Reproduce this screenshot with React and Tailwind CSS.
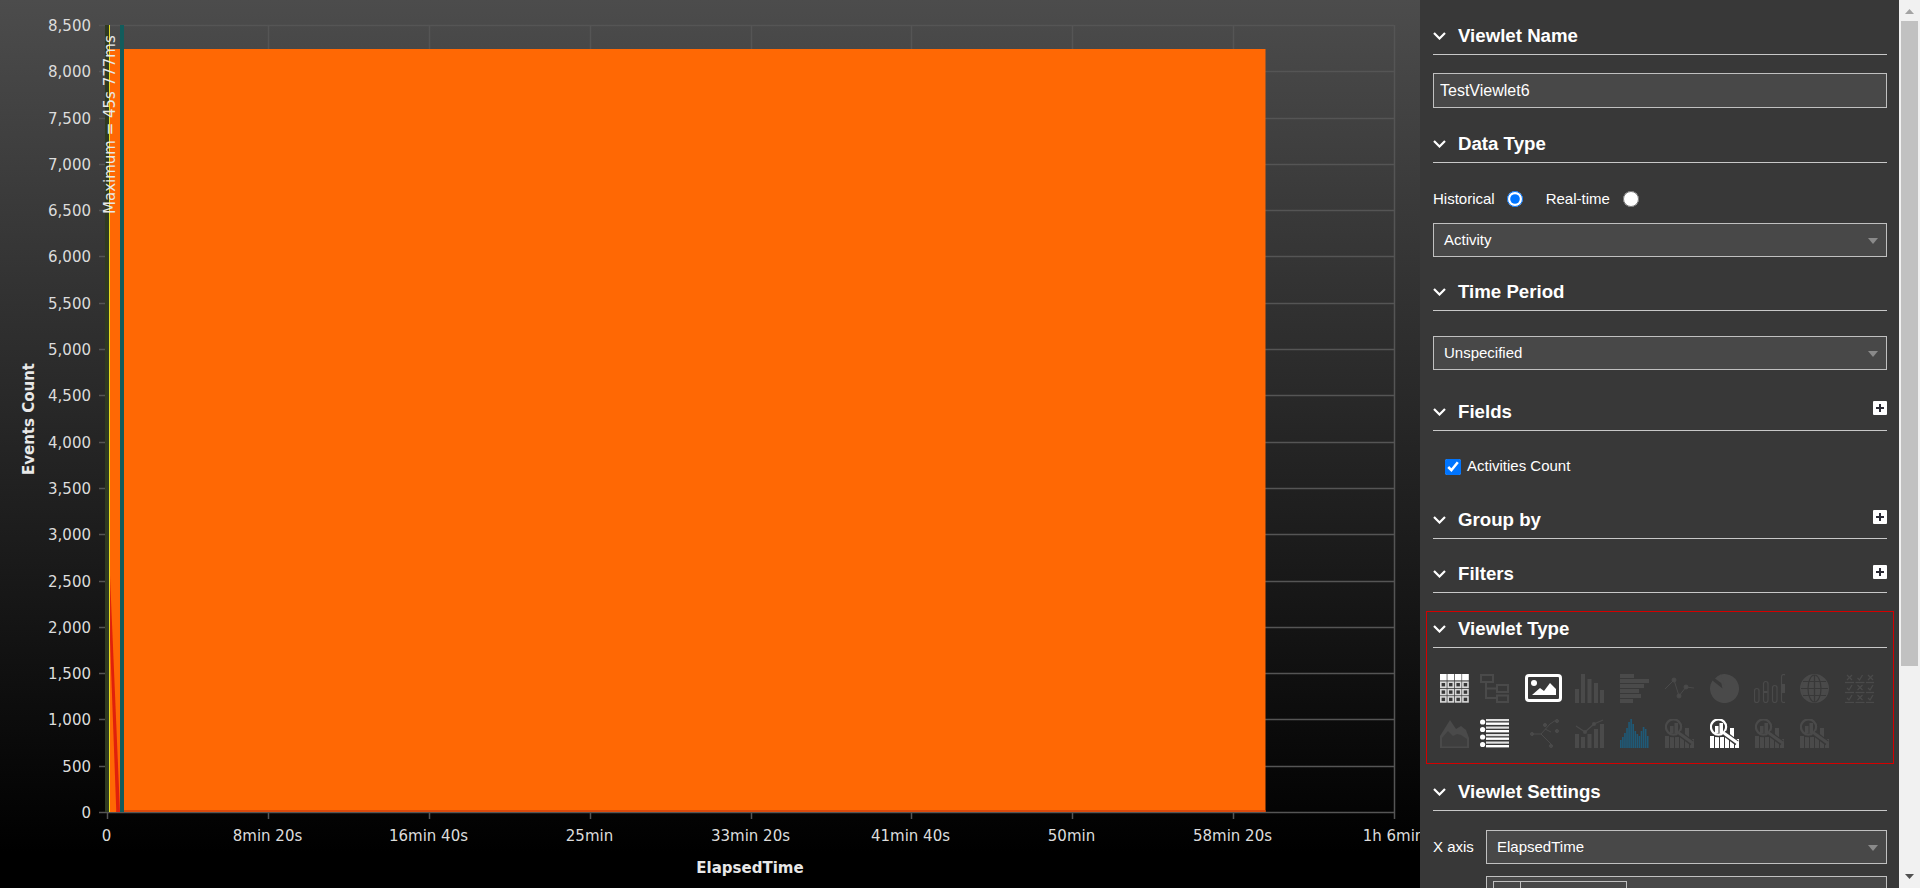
import React from 'react';

const yLabels = ['8,500', '8,000', '7,500', '7,000', '6,500', '6,000', '5,500', '5,000', '4,500', '4,000', '3,500', '3,000', '2,500', '2,000', '1,500', '1,000', '500', '0'];
const xLabels = ['0', '8min 20s', '16min 40s', '25min', '33min 20s', '41min 40s', '50min', '58min 20s', '1h 6min'];

function Chart() {
  const top = 25;
  const bottom = 812;
  const left = 107;
  const right = 1394;
  const stepY = (bottom - top) / 17;
  const stepX = (right - left) / 8;

  return (
    <div className="h-full w-[1420px] shrink-0 overflow-hidden bg-[linear-gradient(180deg,#4c4c4c_0%,#000000_96%)]">
      <svg width="1420" height="888" className="block" style={{ fontFamily: '"DejaVu Sans", sans-serif' }}>
        {yLabels.map((label, i) => {
          const y = Math.round(top + i * stepY) + 0.5;
          return (
            <g key={label}>
              <line x1="99" x2={right} y1={y} y2={y} stroke="#555555" strokeWidth="1.5" />
              <text x="91" y={y + 5} textAnchor="end" fontSize="15" fill="#dcdcdc">{label}</text>
            </g>
          );
        })}
        {xLabels.map((label, i) => {
          const x = Math.round(left + i * stepX) + 0.5;
          return (
            <g key={label}>
              <line x1={x} x2={x} y1={top} y2="819" stroke="#555555" strokeWidth="1.5" />
              <text x={x - 1} y="841" textAnchor="middle" fontSize="15" fill="#dcdcdc">{label}</text>
            </g>
          );
        })}

        <rect x="110" y="49" width="1155.5" height="763" fill="#ff6804" />
        <rect x="116" y="810" width="1149.5" height="2" fill="#dc4a0c" />
        <polygon points="110,576 120,812 116.3,812 110,640" fill="#e0200c" />
        <rect x="105" y="25" width="4" height="787" fill="#2f3a22" />
        <rect x="109" y="25" width="1" height="787" fill="#e4dc22" />
        <rect x="120" y="25" width="4" height="787" fill="#125c5c" />

        <text transform="translate(115,214) rotate(-90)" fontSize="15" fill="#e8e8e8">Maximum = 45s 777ms</text>
        <text transform="translate(34,419) rotate(-90)" textAnchor="middle" fontSize="15" fontWeight="700" fill="#e8e8e8">Events Count</text>
        <text x="750" y="873" textAnchor="middle" fontSize="15" fontWeight="700" fill="#e8e8e8">ElapsedTime</text>
      </svg>
    </div>
  );
}

function Chevron() {
  return (
    <svg width="13" height="8" viewBox="0 0 13 8" className="shrink-0">
      <polyline points="1,1 6.5,6.5 12,1" fill="none" stroke="#fff" strokeWidth="2.2" />
    </svg>
  );
}

function PlusBox({ className }) {
  return (
    <svg width="14" height="14" viewBox="0 0 14 14" className={`shrink-0 self-start ${className}`}>
      <rect width="14" height="14" rx="1" fill="#fff" />
      <path d="M7 3v8M3 7h8" stroke="#2b2b35" strokeWidth="2" />
    </svg>
  );
}

function Header({ title, plus, plusClass = '', className = '' }) {
  return (
    <div className={`flex h-[30px] items-center border-b border-[#c8c8c8] pb-[7px] ${className}`}>
      <Chevron />
      <span className="ml-3 flex-1 text-[18.67px] leading-none font-bold text-white">{title}</span>
      {plus && <PlusBox className={plusClass} />}
    </div>
  );
}

function Select({ value, className = '' }) {
  return (
    <div className={`flex h-[34px] items-center justify-between border border-[#c0c0c0] bg-[#484848] pt-px pr-2 pl-[10px] text-[15px] text-white ${className}`}>
      <span>{value}</span>
      <svg width="10" height="6" viewBox="0 0 10 6"><polygon points="0,0 10,0 5,6" fill="#8a8a8a" /></svg>
    </div>
  );
}

const dim = '#4a4a4a';

function TableIcon() {
  const cols = [0, 7.4, 14.8, 22.1];
  return (
    <svg width="29" height="29" viewBox="0 0 29 29">
      {cols.map((x) => <rect key={x} x={x} y="0" width="6.7" height="6.4" fill="#fff" />)}
      {[7.4, 14.8, 22.1].map((y) => cols.map((x) => (
        <rect key={`${x}-${y}`} x={x + 0.8} y={y + 0.8} width="5.1" height="5" fill="none" stroke="#d8d8d8" strokeWidth="1.6" />
      )))}
    </svg>
  );
}

function TreeIcon() {
  return (
    <svg width="29" height="29" viewBox="0 0 29 29" fill="none" stroke={dim} strokeWidth="2">
      <rect x="1" y="1" width="12" height="7" />
      <rect x="17" y="11" width="11" height="7" />
      <rect x="17" y="21.5" width="11" height="6.5" />
      <path d="M6 8v16h11M6 14.5h11" />
    </svg>
  );
}

function ImageIcon() {
  return (
    <svg width="38" height="29" viewBox="0 0 38 29">
      <rect x="1.5" y="1.5" width="34" height="25" rx="2.5" fill="none" stroke="#fff" strokeWidth="3" />
      <circle cx="9" cy="9" r="3" fill="#fff" />
      <polygon points="7,21 15,14 19,17 25,9 31,15 31,21" fill="#fff" />
    </svg>
  );
}

function BarsIcon() {
  return (
    <svg width="29" height="29" viewBox="0 0 29 29" fill={dim}>
      <rect x="0" y="15" width="4" height="14" />
      <rect x="6" y="0" width="4" height="29" />
      <rect x="12.5" y="5" width="4" height="24" />
      <rect x="19" y="9" width="4" height="20" />
      <rect x="25" y="16" width="4" height="13" />
    </svg>
  );
}

function HBarsIcon() {
  return (
    <svg width="29" height="29" viewBox="0 0 29 29" fill={dim}>
      <rect x="0" y="0" width="14" height="4" />
      <rect x="0" y="5" width="29" height="4" />
      <rect x="0" y="10" width="24" height="4" />
      <rect x="0" y="15" width="19" height="4" />
      <rect x="0" y="20" width="21" height="4" />
      <rect x="0" y="25" width="13" height="4" />
    </svg>
  );
}

function LineIcon() {
  return (
    <svg width="29" height="29" viewBox="0 0 29 29" fill={dim} stroke={dim}>
      <polyline points="0,15 9,6 14,22 21,13 29,14" fill="none" strokeWidth="1" />
      <circle cx="9" cy="6" r="2" />
      <circle cx="14" cy="22" r="2" />
      <circle cx="21" cy="13" r="2" />
    </svg>
  );
}

function PieIcon() {
  return (
    <svg width="29" height="29" viewBox="0 0 29 29" fill={dim}>
      <path d="M12.5 14.5 9.5 1A14.5 14.5 0 1 1 2.5 6.5Z" />
      <path d="M11 0.5 14.5 11.5 5 4.5A14 14 0 0 1 11 0.5Z" />
    </svg>
  );
}

function CandleIcon() {
  return (
    <svg width="31" height="29" viewBox="0 0 31 29" fill="none" stroke={dim}>
      {[[0, 14], [9, 7], [18, 11], [27, 0]].map(([x, y]) => (
        <g key={x}>
          <rect x={x + 0.5} y={y + 0.5} width="4.5" height={28 - y} rx="2.2" strokeWidth="1.2" />
          <rect x={x + 1} y={y + 10} width="3.5" height={19 - y - 10} fill={dim} stroke="none" />
        </g>
      ))}
    </svg>
  );
}

function GlobeIcon() {
  return (
    <svg width="29" height="29" viewBox="0 0 29 29" fill="none" stroke={dim} strokeWidth="2">
      <circle cx="14.5" cy="14.5" r="13.5" fill={dim} />
      <g stroke="#383838" strokeWidth="1.2">
        <ellipse cx="14.5" cy="14.5" rx="6.5" ry="13.5" />
        <path d="M14.5 1v27M1 14.5h27M3 7.5h23M3 21.5h23" />
      </g>
    </svg>
  );
}

function MatrixIcon() {
  const marks = [
    ['x', 'v', 'x'],
    ['v', 'x', 'v'],
    ['v', 'x', 'v'],
  ];
  return (
    <svg width="29" height="29" viewBox="0 0 29 29" fill="none" stroke={dim} strokeWidth="1.3">
      {marks.map((row, r) => row.map((m, c) => {
        const x = 2 + c * 10.5;
        const y = 1 + r * 10;
        return (
          <g key={`${r}-${c}`}>
            <path d={m === 'x' ? `M${x} ${y}l5 5M${x + 5} ${y}l-5 5` : `M${x} ${y + 3}l2 2 3-5`} />
            <path d={`M${x - 2} ${y + 7.5}h9`} />
          </g>
        );
      }))}
    </svg>
  );
}

function AreaIcon() {
  return (
    <svg width="29" height="29" viewBox="0 0 29 29" fill={dim}>
      <path d="M0 29V17L5 9l5-8 6 9 5-3 5 4 3 8v13Z" />
      <path d="M2 27.5V19l6-7 5 5 4-2 4 1 6 4v7.5Z" fill="#383838" opacity="0.65" />
    </svg>
  );
}

function ListIcon() {
  return (
    <svg width="29" height="29" viewBox="0 0 29 29" fill="#fff">
      {[3, 10.5, 18, 25.5].map((y) => (
        <g key={y}>
          <circle cx="2.6" cy={y} r="2.6" />
          <rect x="6" y={y - 3} width="23" height="2.2" fill="#e0e0e0" />
          <rect x="6" y={y + 0.5} width="23" height="2.4" />
        </g>
      ))}
    </svg>
  );
}

function NetworkIcon() {
  return (
    <svg width="29" height="29" viewBox="0 0 29 29" fill={dim} stroke={dim}>
      <path d="M1 15h10l10 10M11 15l9-10 6-4M15 10l6 3" fill="none" strokeWidth="1" />
      <circle cx="2" cy="15" r="1.6" />
      <circle cx="15" cy="6" r="1.6" />
      <circle cx="27" cy="2" r="1.6" />
      <circle cx="27" cy="12" r="1.6" />
      <circle cx="21" cy="27" r="1.6" />
    </svg>
  );
}

function ComboIcon() {
  return (
    <svg width="29" height="29" viewBox="0 0 29 29" fill={dim} stroke="none">
      <rect x="0" y="15" width="4" height="14" />
      <rect x="6" y="18" width="4" height="11" />
      <rect x="12.5" y="15" width="4" height="14" />
      <rect x="19" y="10" width="4" height="19" />
      <rect x="25" y="5" width="4" height="24" />
      <polyline points="1,7 10,13 19,5 28,1" fill="none" stroke={dim} strokeWidth="1.3" />
      <circle cx="10" cy="13" r="2" />
      <circle cx="19" cy="5" r="2" />
    </svg>
  );
}

function StripedAreaIcon() {
  const heights = [8, 11, 15, 20, 26, 29, 24, 17, 14, 12, 17, 21, 19, 12];
  return (
    <svg width="29" height="29" viewBox="0 0 29 29" fill="#1f5a78">
      {heights.map((h, i) => <rect key={i} x={i * 2.07} y={29 - h} width="1.6" height={h} />)}
    </svg>
  );
}

function SearchChartIcon({ color }) {
  return (
    <svg width="29" height="29" viewBox="0 0 29 29" style={{ color }}>
      <g fill="currentColor">
        <rect x="0" y="17" width="4" height="12" />
        <rect x="5" y="18" width="4" height="11" />
        <rect x="10" y="18" width="4" height="11" />
        <rect x="15" y="18" width="4" height="11" />
        <rect x="20" y="9" width="4" height="20" />
        <rect x="25" y="20" width="4" height="9" />
        <rect x="5" y="7" width="3.5" height="7" />
        <rect x="9.5" y="4" width="3.5" height="10" />
      </g>
      <circle cx="8.5" cy="8" r="9.5" fill="none" stroke="#383838" strokeWidth="1.5" />
      <circle cx="8.5" cy="8" r="7.6" fill="none" stroke="currentColor" strokeWidth="2.2" />
      <path d="M14 14 27 24" stroke="#383838" strokeWidth="5.5" />
      <path d="M14.5 14.5 27 23.5" stroke="currentColor" strokeWidth="3" strokeLinecap="round" />
    </svg>
  );
}

function ViewletIcons() {
  return (
    <div className="mt-[26px] ml-[7px] grid h-[89px] grid-cols-[repeat(10,45px)] grid-rows-[45px_44px]">
      <TableIcon />
      <div className="-ml-[5px]"><TreeIcon /></div>
      <div className="-ml-[5px]"><ImageIcon /></div>
      <BarsIcon />
      <HBarsIcon />
      <LineIcon />
      <PieIcon />
      <div className="-ml-px"><CandleIcon /></div>
      <GlobeIcon />
      <MatrixIcon />
      <AreaIcon />
      <div className="-ml-[5px]"><ListIcon /></div>
      <NetworkIcon />
      <ComboIcon />
      <StripedAreaIcon />
      <SearchChartIcon color={dim} />
      <SearchChartIcon color="#ffffff" />
      <SearchChartIcon color={dim} />
      <SearchChartIcon color={dim} />
    </div>
  );
}

function SidePanel() {
  return (
    <div className="h-full w-[479px] shrink-0 overflow-hidden bg-[#383838] pt-[25px] pr-3 pl-[13px] text-white" style={{ fontFamily: '"Liberation Sans", Arial, sans-serif' }}>
      <Header title="Viewlet Name" />
      <input
        defaultValue="TestViewlet6"
        className="mt-[18px] block h-[35px] w-full border border-[#c0c0c0] bg-[#484848] px-[6px] text-base text-white outline-none"
      />

      <Header title="Data Type" className="mt-[25px]" />
      <div className="mt-[26px] flex h-5 items-center text-[15px]">
        <span>Historical</span>
        <input type="radio" name="dataType" defaultChecked className="m-0 ml-3 h-4 w-4" />
        <span className="ml-[23px]">Real-time</span>
        <input type="radio" name="dataType" className="m-0 ml-[13px] h-4 w-4" />
      </div>
      <Select value="Activity" className="mt-[14px]" />

      <Header title="Time Period" className="mt-[24px]" />
      <Select value="Unspecified" className="mt-[25px]" />

      <Header title="Fields" plus className="mt-[31px]" />
      <div className="mt-[27px] flex h-[17px] items-center pl-3 text-[15px]">
        <input type="checkbox" defaultChecked className="m-0 h-4 w-4" />
        <span className="ml-[6px]">Activities Count</span>
      </div>

      <Header title="Group by" plus plusClass="mt-px" className="mt-[34px]" />
      <Header title="Filters" plus plusClass="mt-[2px]" className="mt-[24px]" />

      <div className="mt-[18px] -mx-[7px] border border-[#d40000] px-[6px] pt-[6px]">
        <Header title="Viewlet Type" />
        <ViewletIcons />
      </div>

      <Header title="Viewlet Settings" className="mt-[17px]" />
      <div className="mt-[19px] flex items-center text-[15px]">
        <span className="w-[53px] whitespace-nowrap">X axis</span>
        <Select value="ElapsedTime" className="flex-1" />
      </div>
      <div className="mt-3 ml-[53px] h-[60px] border border-[#c0c0c0] bg-[#484848] pt-1 pl-[6px]">
        <div className="flex h-[40px] w-[134px] border border-[#c0c0c0]">
          <div className="w-[27px] border-r border-[#c0c0c0]" />
        </div>
      </div>
    </div>
  );
}

function ScrollBar() {
  return (
    <div className="flex h-full w-[21px] shrink-0 flex-col items-center bg-[#f1f1f1]">
      <svg width="21" height="21" viewBox="0 0 21 21" className="shrink-0">
        <polygon points="6,14 15,14 10.5,9" fill="#a3a3a3" />
      </svg>
      <div className="h-[645px] w-[17px] bg-[#c1c1c1]" />
      <div className="flex-1" />
      <svg width="21" height="21" viewBox="0 0 21 21" className="shrink-0">
        <polygon points="6,7 15,7 10.5,12" fill="#505050" />
      </svg>
    </div>
  );
}

export default function App() {
  return (
    <div className="flex h-screen w-screen overflow-hidden bg-black">
      <Chart />
      <SidePanel />
      <ScrollBar />
    </div>
  );
}
